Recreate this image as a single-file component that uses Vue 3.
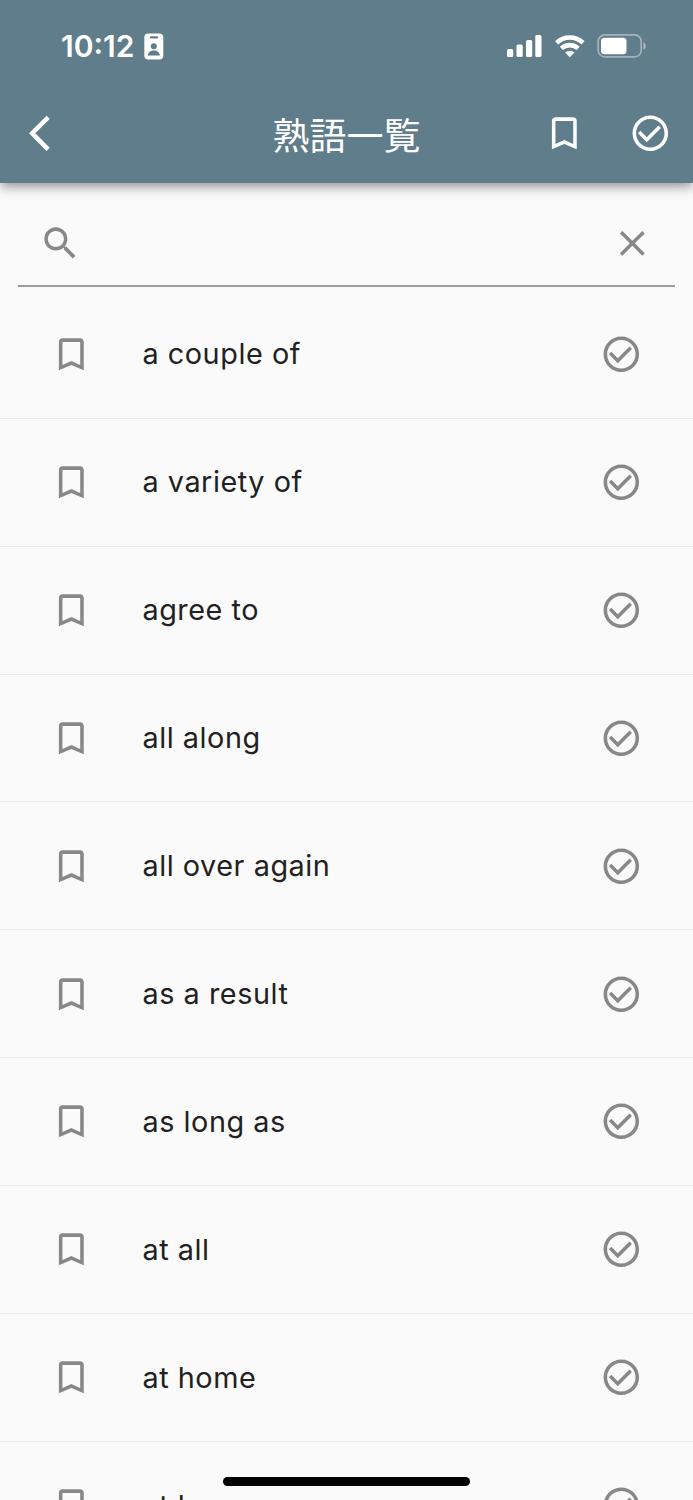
<script setup>
const phrases = [
  'a couple of', 'a variety of', 'agree to', 'all along', 'all over again',
  'as a result', 'as long as', 'at all', 'at home', 'at large',
]
const bookmark = 'M17 3H7c-1.1 0-1.99.9-1.99 2L5 21l7-3 7 3V5c0-1.1-.9-2-2-2zm0 15l-5-2.18L7 18V5h10v13z'
const check = 'M16.59 7.58L10 14.17l-3.59-3.58L5 12l5 5 8-8zM12 2C6.48 2 2 6.48 2 12s4.48 10 10 10 10-4.48 10-10S17.52 2 12 2zm0 18c-4.42 0-8-3.58-8-8s3.58-8 8-8 8 3.58 8 8-3.58 8-8 8z'
</script>

<template>
  <div class="screen">
    <header class="header">
      <div class="status">
        <span class="time">10:12</span>
        <svg class="badge" width="20" height="27" viewBox="0 0 20 27">
          <rect x=".3" y=".5" width="19" height="26" rx="4" fill="#fff" />
          <rect x="5.8" y="3.3" width="8.4" height="2.2" rx="1.1" fill="#607d8b" />
          <circle cx="9.8" cy="13.3" r="3" fill="#607d8b" />
          <path d="M3.8 22.4c.2-3.3 3-5 6-5s5.8 1.7 6 5z" fill="#607d8b" />
        </svg>
        <div class="signals">
          <svg width="36" height="24" viewBox="0 0 36 24" fill="#fff">
            <rect x="0" y="15" width="6.2" height="8" rx="1.6" />
            <rect x="9.5" y="10.5" width="6.2" height="12.5" rx="1.6" />
            <rect x="19" y="6" width="6.2" height="17" rx="1.6" />
            <rect x="28.3" y="1" width="6.2" height="22" rx="1.6" />
          </svg>
          <svg class="wifi" width="30" height="24" viewBox="0 0 30 24" fill="none" stroke="#fff" stroke-width="4.6">
            <path d="M1.6 8.8a19 19 0 0 1 26.4 0" />
            <path d="M6.4 14.4a12.3 12.3 0 0 1 16.8 0" />
            <path d="M10.1 18.6a7 7 0 0 1 9.4 0L14.8 23.2z" fill="#fff" stroke="none" />
          </svg>
          <svg class="battery" width="50" height="24" viewBox="0 0 50 24">
            <rect x="1.2" y=".9" width="43" height="22" rx="6.5" fill="none" stroke="#fff" stroke-opacity=".42" stroke-width="1.7" />
            <rect x="4" y="3.7" width="25.5" height="16.5" rx="3.5" fill="#fff" />
            <path d="M46.5 8.3c2.8 1 2.8 6.4 0 7.4z" fill="#fff" fill-opacity=".5" />
          </svg>
        </div>
      </div>
      <div class="appbar">
        <svg class="icon back" viewBox="0 0 24 24"><path d="M11.67 3.87L9.9 2.1 0 12l9.9 9.9 1.77-1.77L3.54 12z" /></svg>
        <h1>熟語一覧</h1>
        <div class="actions">
          <svg class="icon" viewBox="0 0 24 24"><path :d="bookmark" /></svg>
          <svg class="icon" viewBox="0 0 24 24"><path :d="check" /></svg>
        </div>
      </div>
    </header>
    <div class="search">
      <svg class="icon" viewBox="0 0 24 24"><path d="M15.5 14h-.79l-.28-.27C15.41 12.59 16 11.11 16 9.5 16 5.91 13.09 3 9.5 3S3 5.91 3 9.5 5.91 16 9.5 16c1.61 0 3.09-.59 4.23-1.57l.27.28v.79l5 4.99L20.49 19l-4.99-5zm-6 0C7.01 14 5 11.99 5 9.5S7.01 5 9.5 5 14 7.01 14 9.5 11.99 14 9.5 14z" /></svg>
      <svg class="icon" viewBox="0 0 24 24"><path d="M19 6.41L17.59 5 12 10.59 6.41 5 5 6.41 10.59 12 5 17.59 6.41 19 12 13.41 17.59 19 19 17.59 13.41 12z" /></svg>
    </div>
    <ul class="list">
      <li v-for="p in phrases" :key="p">
        <svg class="icon" viewBox="0 0 24 24"><path :d="bookmark" /></svg>
        <span class="phrase">{{ p }}</span>
        <svg class="icon" viewBox="0 0 24 24"><path :d="check" /></svg>
      </li>
    </ul>
    <div class="home"></div>
  </div>
</template>

<style>
html, body { margin: 0; background: #fafafa; }
</style>

<style scoped>
.screen {
  position: relative;
  width: 693px;
  height: 1500px;
  overflow: hidden;
  background: #fafafa;
  font-family: Inter, "Noto Sans CJK JP", sans-serif;
}
.icon { display: block; flex: none; width: 42.65px; height: 42.65px; fill: currentColor; }
.header {
  height: 183px;
  background: #607d8b;
  color: #fff;
  box-shadow: 0 3.5px 7px -1.8px rgba(0,0,0,.2), 0 7px 9px rgba(0,0,0,.14), 0 1.8px 17px rgba(0,0,0,.12);
}
.status { display: flex; align-items: center; height: 84px; padding: 9px 46px 0 61px; box-sizing: border-box; }
.time { width: 83px; margin-top: -1px; font-size: 30px; font-weight: 600; line-height: 34px; }
.signals { display: flex; align-items: center; margin-left: auto; margin-top: -1px; }
.wifi { margin-left: 12px; }
.battery { margin-left: 12px; }
.appbar {
  display: grid;
  grid-template-columns: 1fr auto 1fr;
  align-items: center;
  height: 99px;
  padding: 0 22px 0 29px;
}
h1 { margin: 0 7px 0 0; font: 400 37px/50px "Noto Sans CJK JP", sans-serif; }
.actions { display: flex; gap: 43px; justify-content: flex-end; }
.actions .icon:last-child { margin-right: -.4px; }
.search {
  display: flex;
  justify-content: space-between;
  height: 104px;
  margin: 0 18px 3.7px;
  padding: 39.2px 21.2px 0 20.8px;
  box-sizing: border-box;
  border-bottom: 2px solid #9c9c9c;
  color: #888;
}
.list { list-style: none; margin: 0; padding: 0; }
.list li {
  display: flex;
  align-items: center;
  height: 127.95px;
  box-sizing: border-box;
  padding: 0 50px;
  border-bottom: 1px solid #e9e9e9;
  color: #888;
}
.phrase { flex: 1; margin-left: 49.8px; font-size: 28.8px; line-height: 42px; letter-spacing: .55px; color: #212121; }
.home {
  position: absolute;
  left: 223px;
  bottom: 14px;
  width: 247px;
  height: 9px;
  border-radius: 5px;
  background: #000;
}
</style>
